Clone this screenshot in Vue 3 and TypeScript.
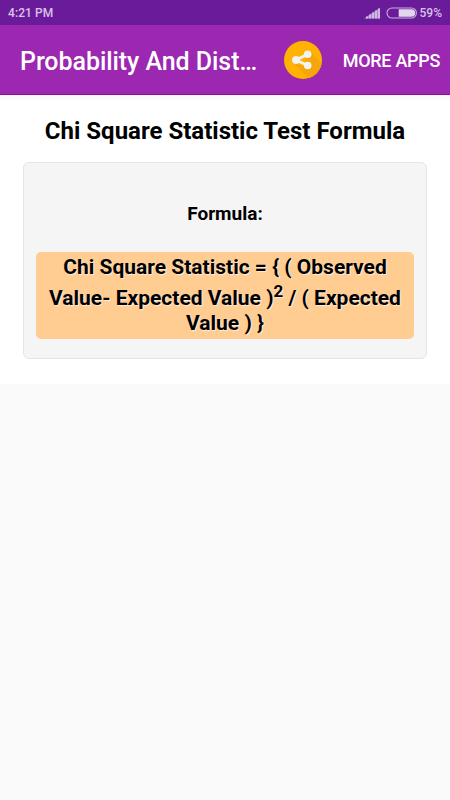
<script setup lang="ts">
const time: string = '4:21 PM'
const battery: number = 59
const signalBars: number[] = [2, 4, 6, 8, 10]
</script>

<template>
  <div class="screen">
    <div class="status">
      <span class="time">{{ time }}</span>
      <svg class="signal" width="17" height="12" viewBox="0 0 17 12">
        <path d="M0 11.500 16 .8V11.500Z" fill="#a983c8" />
        <rect v-for="(h, i) in signalBars" :key="i" :x="2 + i * 3" :y="11.5 - h" width="2" :height="h" fill="#d0b8e2" />
      </svg>
      <svg class="battery" width="31" height="12" viewBox="0 0 31 12">
        <rect x="1" y="1" width="29.400" height="10" rx="5" fill="none" stroke="#c9afdf" stroke-width="1.100" />
        <path d="M12.700 2.200H25.400a3.800 3.800 0 0 1 0 7.600H12.700Z" fill="#e3d5ee" />
      </svg>
      <span class="percent">{{ battery }}%</span>
    </div>
    <header class="toolbar">
      <h1 class="title">Probability And Dist…</h1>
      <svg class="share" width="40" height="40" viewBox="0 0 40 40">
        <defs>
          <clipPath id="disc"><circle cx="20" cy="20" r="19" /></clipPath>
        </defs>
        <circle cx="20" cy="20" r="19" fill="#ffb300" />
        <path clip-path="url(#disc)" d="M10.500 23 27.500 41H45V30L27.500 11.500 22 20 26 28Z" fill="#f4a60b" />
        <path d="M24.700 14.300 13 20 24.700 25.500" fill="none" stroke="#f3f3f3" stroke-width="2.800" />
        <circle cx="24.700" cy="14.300" r="3.800" fill="#f3f3f3" />
        <circle cx="13" cy="20" r="3.900" fill="#f3f3f3" />
        <circle cx="24.700" cy="25.500" r="3.800" fill="#f3f3f3" />
      </svg>
      <span class="more">MORE APPS</span>
    </header>
    <main class="content">
      <h2 class="heading">Chi Square Statistic Test Formula</h2>
      <section class="card">
        <h3 class="label">Formula:</h3>
        <div class="formula">
          <div class="line first">Chi Square Statistic = { ( Observed</div>
          <div class="line second">Value- Expected Value )<sup>2</sup> / ( Expected</div>
          <div class="line third">Value ) }</div>
        </div>
      </section>
    </main>
  </div>
</template>

<style>
body {
  margin: 0;
  background: #fafafa;
}
</style>

<style scoped>
.screen {
  width: 450px;
  height: 800px;
  overflow: hidden;
  background: #fafafa;
  font-family: Roboto, sans-serif;
}
.status {
  display: flex;
  align-items: center;
  box-sizing: border-box;
  height: 25px;
  padding: 0 8px;
  background: #6a1b9a;
  color: #d8c4e6;
  font-size: 12px;
  font-weight: 500;
}
.time {
  margin-right: auto;
  letter-spacing: 0.1px;
}
.battery {
  margin: 0 3px 0 5px;
}
.toolbar {
  display: flex;
  align-items: center;
  box-sizing: border-box;
  height: 70px;
  padding: 0 10px 0 20px;
  background: #9c27b0;
  border-bottom: 1px solid #8e0ba0;
  color: #fff;
}
.title {
  width: 263px;
  margin: 4px 0 0;
  font-size: 25px;
  line-height: 30px;
  font-weight: 500;
  letter-spacing: -0.06px;
  white-space: nowrap;
}
.share {
  flex: none;
}
.more {
  margin: 2px 0 0 auto;
  font-size: 18px;
  font-weight: 500;
  letter-spacing: -0.3px;
  white-space: nowrap;
}
.content {
  box-sizing: border-box;
  height: 284px;
  margin-top: 5px;
  padding: 16px 23px 0;
  background: #fff;
  color: #000;
  text-align: center;
}
.heading {
  margin: 0 0 16px;
  font-size: 24px;
  line-height: 30px;
  font-weight: 700;
  white-space: nowrap;
}
.card {
  box-sizing: border-box;
  height: 197px;
  padding: 39px 12px 0;
  background: #f5f5f5;
  border: 1px solid #e5e5e5;
  border-radius: 6px;
}
.label {
  margin: 0 0 26.300px;
  font-size: 19px;
  line-height: 24px;
  font-weight: 700;
}
.formula {
  height: 86.300px;
  background: #ffcc91;
  border-radius: 5px;
  font-size: 21px;
  font-weight: 700;
  text-shadow: 1px 1px 1px #ffefd8;
  white-space: nowrap;
}
.first {
  height: 31px;
  line-height: 30px;
}
.second {
  height: 25px;
  line-height: 30px;
}
.third {
  height: 25px;
  line-height: 30px;
}
sup {
  font-size: 17px;
  line-height: 0;
  vertical-align: 8px;
}
</style>
